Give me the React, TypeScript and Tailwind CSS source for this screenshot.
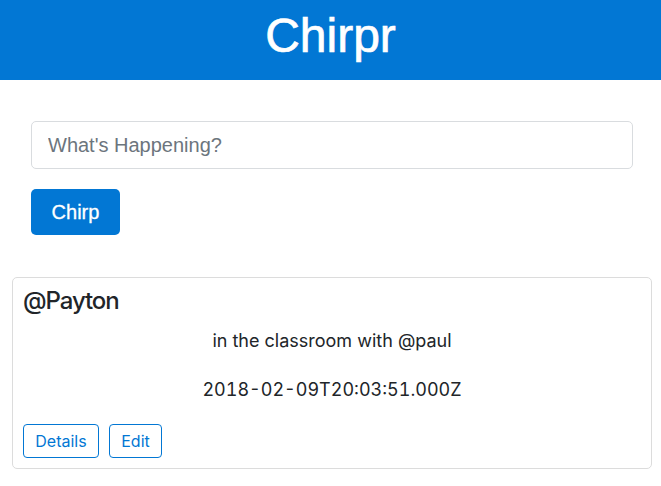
import { useState } from "react";

const chirps = [
  {
    user: "Payton",
    text: "in the classroom with @paul",
    created: "2018-02-09T20:03:51.000Z",
  },
];

export default function App() {
  const [draft, setDraft] = useState("");

  return (
    <div className="min-h-[486px] bg-white text-[#212529] font-['Inter',sans-serif]">
      {/* Header */}
      <header className="h-20 bg-[#0277d4] pt-[7px] text-center">
        <h1 className="text-[48px] leading-[1.2] font-normal text-white font-['Liberation_Sans',Arial,sans-serif] [-webkit-text-stroke:0.7px_white]">
          Chirpr
        </h1>
      </header>

      {/* Compose */}
      <div className="pt-[41px] pl-[31px] font-['Liberation_Sans',Arial,sans-serif]">
        <input
          value={draft}
          onChange={(e) => setDraft(e.target.value)}
          placeholder="What's Happening?"
          className="block w-[602px] h-12 px-4 text-[20px] border border-[#d9dcdf] rounded-[5px] outline-none placeholder:text-[#6c757d]"
        />
        <button className="mt-5 h-[46px] w-[89px] bg-[#0277d4] text-white text-[20px] rounded-[5px] [-webkit-text-stroke:0.3px_white]">
          Chirp
        </button>
      </div>

      {/* Feed */}
      <div className="pt-[42px] pl-[12px]">
        {chirps.map((c, i) => (
          <div key={i} className="w-[640px] border border-[#dcdcdc] rounded-[5px] px-[10px] pt-[8px] pb-[10px]">
            <h4 className="text-[24px] leading-[29px] font-medium tracking-[-0.045em]">@{c.user}</h4>
            <p className="mt-3 text-[18px] leading-[27px] text-center">{c.text}</p>
            <p className="mt-[22px] text-[18px] leading-[27px] text-center tabular-nums">{c.created}</p>
            <div className="mt-[21px] flex gap-[10px]">
              <button className="h-[34px] w-[76px] text-[16px] text-[#0277d4] border border-[#0277d4] rounded-[4px]">
                Details
              </button>
              <button className="h-[34px] w-[53px] text-[16px] text-[#0277d4] border border-[#0277d4] rounded-[4px]">
                Edit
              </button>
            </div>
          </div>
        ))}
      </div>
    </div>
  );
}
